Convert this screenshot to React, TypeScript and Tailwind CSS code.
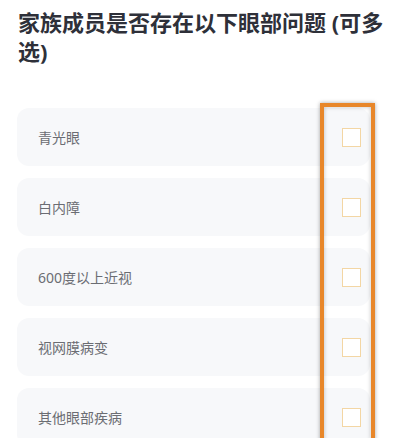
const OPTIONS = ["青光眼", "白内障", "600度以上近视", "视网膜病变", "其他眼部疾病"];

export default function App() {
  return (
    <div
      className="relative w-[400px] h-[438px] overflow-hidden bg-white"
      style={{ fontFamily: '"Noto Sans", "Noto Sans CJK SC", sans-serif' }}
    >
      <h1 className="pl-[18px] pr-[8px] pt-[8px] text-[22px] font-bold leading-[29px] text-[#2e3039]">
        家族成员是否存在以下眼部问题 (可多选)
      </h1>

      <div className="mt-[42px] flex flex-col gap-[12px] pl-[17px] pr-[30px]">
        {OPTIONS.map((label) => (
          <div
            key={label}
            className="flex h-[58px] items-center justify-between rounded-[12px] bg-[#f7f8fa] pl-[21px] pr-[9px]"
          >
            <span className="text-[14px] text-[#6b6d73]">{label}</span>
            <span className="block h-[19px] w-[19px] border border-[#f3d6a4] bg-white" />
          </div>
        ))}
      </div>

      {/* annotation overlay */}
      <div className="pointer-events-none absolute left-[320px] top-[103px] h-[360px] w-[55px] border-[4px] border-[#e8872a] shadow-[0_0_4px_rgba(0,0,0,0.35),inset_0_0_4px_rgba(0,0,0,0.25)]" />
    </div>
  );
}
